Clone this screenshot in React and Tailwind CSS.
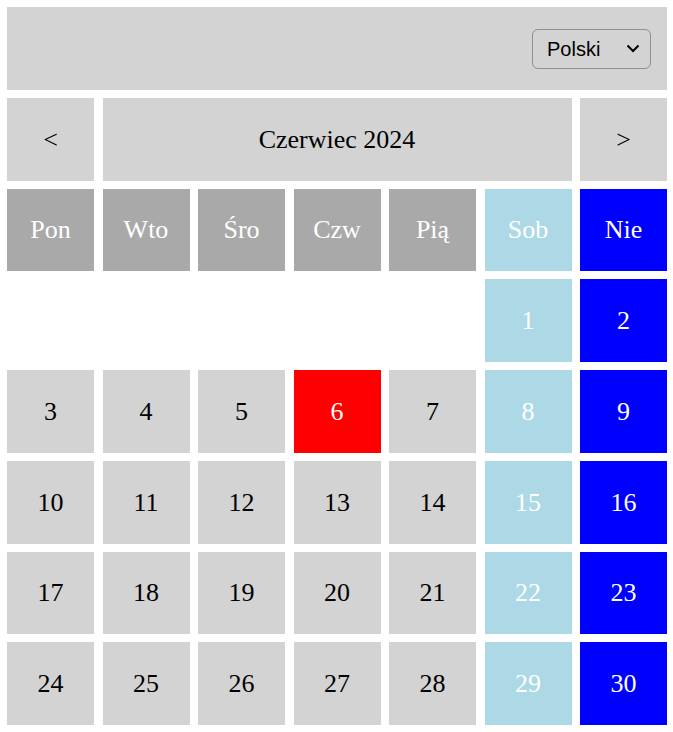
import React, { useState } from 'react';

const DAYS = ['Pon', 'Wto', 'Śro', 'Czw', 'Pią', 'Sob', 'Nie'];

const cellColor = (col, isToday) => {
  if (isToday) return 'bg-[#ff0000] text-white';
  if (col === 5) return 'bg-[#add8e6] text-white';
  if (col === 6) return 'bg-[#0000ff] text-white';
  return 'bg-[#d3d3d3] text-black';
};

const App = () => {
  const [lang, setLang] = useState('pl');
  // czerwiec 2024 zaczyna się w sobotę
  const cells = [];
  for (let i = 0; i < 5; i++) cells.push(null);
  for (let d = 1; d <= 30; d++) cells.push(d);

  return (
    <div
      className="grid h-screen grid-cols-7 grid-rows-8 gap-x-[8.5px] gap-y-2 bg-white py-[7px] pl-[7px] pr-[6px] text-[26px]"
      style={{ fontFamily: '"Liberation Serif", "Times New Roman", serif' }}
    >
      <div className="col-span-7 flex items-center justify-end bg-[#d3d3d3] pr-4">
        <div className="relative">
          <select
            value={lang}
            onChange={(e) => setLang(e.target.value)}
            className="h-10 w-[119px] appearance-none rounded-md border border-[#8f8f8f] bg-transparent pl-[14px] text-[20px] text-black"
            style={{ fontFamily: '"Liberation Sans", Arial, sans-serif' }}
          >
            <option value="pl">Polski</option>
            <option value="en">English</option>
          </select>
          <svg
            className="pointer-events-none absolute right-[11px] top-[16px]"
            width="14"
            height="9"
            viewBox="0 0 14 9"
            fill="none"
            stroke="black"
            strokeWidth="2"
          >
            <path d="M1.5 1.5 L7 7 L12.5 1.5" />
          </svg>
        </div>
      </div>

      <button className="flex items-center justify-center bg-[#d3d3d3] text-black">&lt;</button>
      <div className="col-span-5 flex items-center justify-center bg-[#d3d3d3] text-black">Czerwiec 2024</div>
      <button className="flex items-center justify-center bg-[#d3d3d3] text-black">&gt;</button>

      {DAYS.map((d, i) => (
        <div
          key={d}
          className={`flex items-center justify-center text-white ${
            i === 5 ? 'bg-[#add8e6]' : i === 6 ? 'bg-[#0000ff]' : 'bg-[#a9a9a9]'
          }`}
        >
          {d}
        </div>
      ))}

      {cells.map((d, i) =>
        d === null ? (
          <div key={`e${i}`} />
        ) : (
          <div key={d} className={`flex items-center justify-center ${cellColor(i % 7, d === 6)}`}>
            {d}
          </div>
        )
      )}
    </div>
  );
};

export default App;
